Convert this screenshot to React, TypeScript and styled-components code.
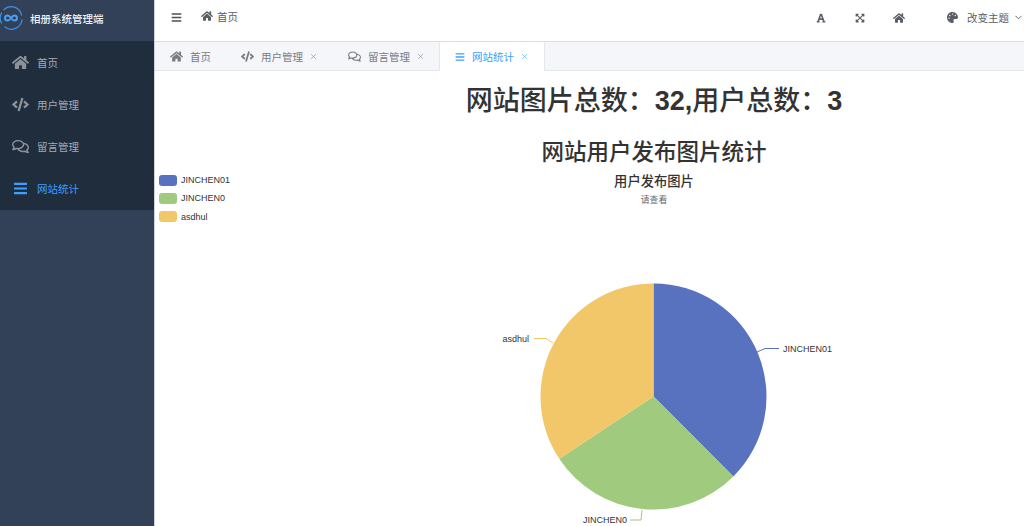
import React from 'react';
import styled, { createGlobalStyle } from 'styled-components';
import { FaBars, FaCode, FaExpandArrowsAlt, FaFont, FaHome, FaPalette, FaRegComments } from 'react-icons/fa';
import { FiChevronDown, FiX } from 'react-icons/fi';

const GlobalStyle = createGlobalStyle`
  html, body {
    margin: 0;
    padding: 0;
    height: 100%;
    overflow: hidden;
    background: #fff;
    font-family: "Liberation Sans", "Noto Sans CJK SC", sans-serif;
  }
  #root {
    height: 100%;
  }
`;

const Layout = styled.div`
  display: flex;
  height: 526px;
`;

const Sidebar = styled.aside`
  width: 154px;
  flex-shrink: 0;
  background: #324158;
  border-right: 1px solid #cfd3da;
`;

const Brand = styled.div`
  display: flex;
  align-items: center;
  gap: 7px;
  height: 41px;
  box-sizing: border-box;
  padding-bottom: 5px;
  color: #eef1f5;
  font-size: 10.5px;
  font-weight: 500;
`;

const Menu = styled.nav`
  background: #1f2d3d;
`;

const MenuItem = styled.div<{ $active?: boolean }>`
  display: flex;
  align-items: center;
  gap: 8px;
  height: 42.2px;
  padding-left: 12px;
  color: ${({ $active }) => ($active ? '#409eff' : '#a3abb4')};
  font-size: 10.5px;
  svg {
    width: 17px;
    height: 17px;
    box-sizing: border-box;
    padding: ${({ $active }) => ($active ? '0 2px' : '0')};
    color: ${({ $active }) => ($active ? '#409eff' : '#8d9298')};
  }
`;

const Main = styled.main`
  flex: 1;
  min-width: 0;
  display: flex;
  flex-direction: column;
`;

const Header = styled.header`
  display: flex;
  align-items: center;
  height: 42px;
  box-sizing: border-box;
  padding: 0 0 6px 16px;
  color: #4c4f54;
  border-bottom: 1px solid #d8dce5;
`;

const Crumb = styled.div`
  display: flex;
  align-items: center;
  gap: 4px;
  margin-left: 19px;
  margin-top: -3px;
  font-size: 10.5px;
  color: #5a5e66;
`;

const HeaderTools = styled.div`
  display: flex;
  align-items: center;
  margin-left: auto;
  color: #5a5e66;
`;

const ToolIcon = styled.span`
  display: flex;
  width: 39px;
  justify-content: center;
`;

const ThemeSwitch = styled.div`
  display: flex;
  align-items: center;
  margin-left: 29px;
  font-size: 10.5px;
  gap: 9px;
`;

const ThemeCaret = styled(FiChevronDown)`
  width: 11px;
  height: 11px;
  margin-left: -5px;
`;

const TabBar = styled.div`
  display: flex;
  height: 29px;
  box-sizing: border-box;
  background: #f5f6fa;
  border-bottom: 1px solid #e4e7ed;
`;

const Tab = styled.div<{ $active?: boolean }>`
  display: flex;
  align-items: center;
  gap: 7px;
  height: 29px;
  box-sizing: border-box;
  padding: 0 15px;
  font-size: 10.5px;
  color: ${({ $active }) => ($active ? '#409eff' : '#777b82')};
  background: ${({ $active }) => ($active ? '#fff' : 'transparent')};
  box-shadow: ${({ $active }) => ($active ? '1px 0 0 #e4e7ed, -1px 0 0 #e4e7ed' : 'none')};
  svg {
    flex-shrink: 0;
  }
`;

const TabClose = styled(FiX)`
  width: 9px;
  height: 9px;
  margin-left: -1px;
  stroke-width: 1.4;
`;

const Content = styled.div`
  flex: 1;
  display: flex;
  min-height: 0;
`;

const Legend = styled.ul`
  width: 129px;
  flex-shrink: 0;
  box-sizing: border-box;
  margin: 0;
  padding: 100px 0 0 4px;
  list-style: none;
`;

const LegendRow = styled.li`
  display: flex;
  align-items: center;
  gap: 4px;
  height: 18.3px;
  font-size: 9px;
  color: #333;
`;

const LegendSwatch = styled.span<{ $color: string }>`
  width: 18px;
  height: 11px;
  border-radius: 3px;
  background: ${({ $color }) => $color};
`;

const Report = styled.section`
  flex: 1;
  display: flex;
  flex-direction: column;
  align-items: center;
  color: #333;
`;

const TotalHeading = styled.h1`
  margin: 14px 0 0;
  font-size: 27px;
  line-height: 33px;
  font-weight: 500;
`;

const Count = styled.span`
  font-weight: 700;
`;

const ChartHeading = styled.h2`
  margin: 21px 0 0;
  font-size: 22.5px;
  line-height: 27px;
  font-weight: 500;
`;

const ChartTitle = styled.div`
  margin-top: 7px;
  font-size: 13.3px;
  line-height: 17px;
  font-weight: 500;
`;

const ChartSubtitle = styled.div`
  margin-top: 4px;
  font-size: 8.8px;
  line-height: 12px;
  color: #666;
`;

const PieSvg = styled.svg`
  display: block;
  flex-shrink: 0;
  width: 400px;
  height: 310px;
  margin-top: 9px;
  text {
    font-family: "Liberation Sans", sans-serif;
    font-size: 9px;
    fill: #333;
  }
`;

const CX = 653.5;
const CY = 396.5;
const R = 113;

const slices = [
  { name: 'JINCHEN01', color: '#5872bf', from: 0, to: 135, line: '757,352 765,348.5 779,348.5', label: [783, 352, 'start'] },
  { name: 'JINCHEN0', color: '#a0ca7e', from: 135, to: 236.5, line: '642,510 641,520 630,520', label: [627, 523, 'end'] },
  { name: 'asdhul', color: '#f2c769', from: 236.5, to: 360, line: '553,343 546,338.5 534,338.5', label: [529, 341.5, 'end'] },
] as const;

const point = (deg: number) => {
  const rad = (deg * Math.PI) / 180;
  return `${CX + R * Math.sin(rad)} ${CY - R * Math.cos(rad)}`;
};

const LogoMark = () => (
  <svg width="23" height="24" viewBox="0 0 23 24" fill="none" style={{ flexShrink: 0 }}>
    <path d="M4 3.5A10.6 10.6 0 0 1 21.5 9" stroke="#3d8fe0" strokeWidth="1.3" strokeLinecap="round" />
    <path d="M22 14A10.6 10.6 0 0 1 5 21" stroke="#3d8fe0" strokeWidth="1.3" strokeLinecap="round" />
    <path d="M1.5 7A10.6 10.6 0 0 0 1.5 17" stroke="#3d8fe0" strokeWidth="1.3" strokeLinecap="round" />
    <path
      d="M11 12c-1.3-1.8-2.3-2.6-3.4-2.6a2.6 2.6 0 0 0 0 5.2c1.1 0 2.1-.8 3.4-2.6zm0 0c1.3 1.8 2.3 2.6 3.4 2.6a2.6 2.6 0 0 0 0-5.2c-1.1 0-2.1.8-3.4 2.6z"
      stroke="#4b9ff0"
      strokeWidth="2"
    />
  </svg>
);

const menuItems = [
  { label: '首页', icon: <FaHome /> },
  { label: '用户管理', icon: <FaCode /> },
  { label: '留言管理', icon: <FaRegComments /> },
  { label: '网站统计', icon: <FaBars />, active: true },
];

const tabs = [
  { label: '首页', icon: <FaHome size={13} /> },
  { label: '用户管理', icon: <FaCode size={13} />, closable: true },
  { label: '留言管理', icon: <FaRegComments size={13} />, closable: true },
  { label: '网站统计', icon: <FaBars size={10} />, closable: true, active: true },
];

export default function App() {
  return (
    <>
      <GlobalStyle />
      <Layout>
        <Sidebar>
          <Brand>
            <LogoMark />
            相册系统管理端
          </Brand>
          <Menu>
            {menuItems.map((item) => (
              <MenuItem key={item.label} $active={item.active}>
                {item.icon}
                {item.label}
              </MenuItem>
            ))}
          </Menu>
        </Sidebar>
        <Main>
          <Header>
            <FaBars size={11} />
            <Crumb>
              <FaHome size={12} />
              首页
            </Crumb>
            <HeaderTools>
              <ToolIcon>
                <FaFont size={10} />
              </ToolIcon>
              <ToolIcon>
                <FaExpandArrowsAlt size={10} />
              </ToolIcon>
              <ToolIcon>
                <FaHome size={12} />
              </ToolIcon>
              <ThemeSwitch>
                <FaPalette size={11} />
                改变主题
                <ThemeCaret />
              </ThemeSwitch>
            </HeaderTools>
          </Header>
          <TabBar>
            {tabs.map((tab) => (
              <Tab key={tab.label} $active={tab.active}>
                {tab.icon}
                {tab.label}
                {tab.closable && <TabClose />}
              </Tab>
            ))}
          </TabBar>
          <Content>
            <Legend>
              {slices.map((s) => (
                <LegendRow key={s.name}>
                  <LegendSwatch $color={s.color} />
                  {s.name}
                </LegendRow>
              ))}
            </Legend>
            <Report>
              <TotalHeading>
                网站图片总数：<Count>32,</Count>用户总数：<Count>3</Count>
              </TotalHeading>
              <ChartHeading>网站用户发布图片统计</ChartHeading>
              <ChartTitle>用户发布图片</ChartTitle>
              <ChartSubtitle>请查看</ChartSubtitle>
              <PieSvg viewBox="454 215 400 310">
                {slices.map((s) => (
                  <g key={s.name}>
                    <path
                      d={`M${CX} ${CY}L${point(s.from)}A${R} ${R} 0 0 1 ${point(s.to)}Z`}
                      fill={s.color}
                    />
                    <polyline points={s.line} fill="none" stroke={s.color} strokeWidth="1" />
                    <text x={s.label[0]} y={s.label[1]} textAnchor={s.label[2]}>
                      {s.name}
                    </text>
                  </g>
                ))}
              </PieSvg>
            </Report>
          </Content>
        </Main>
      </Layout>
    </>
  );
}
